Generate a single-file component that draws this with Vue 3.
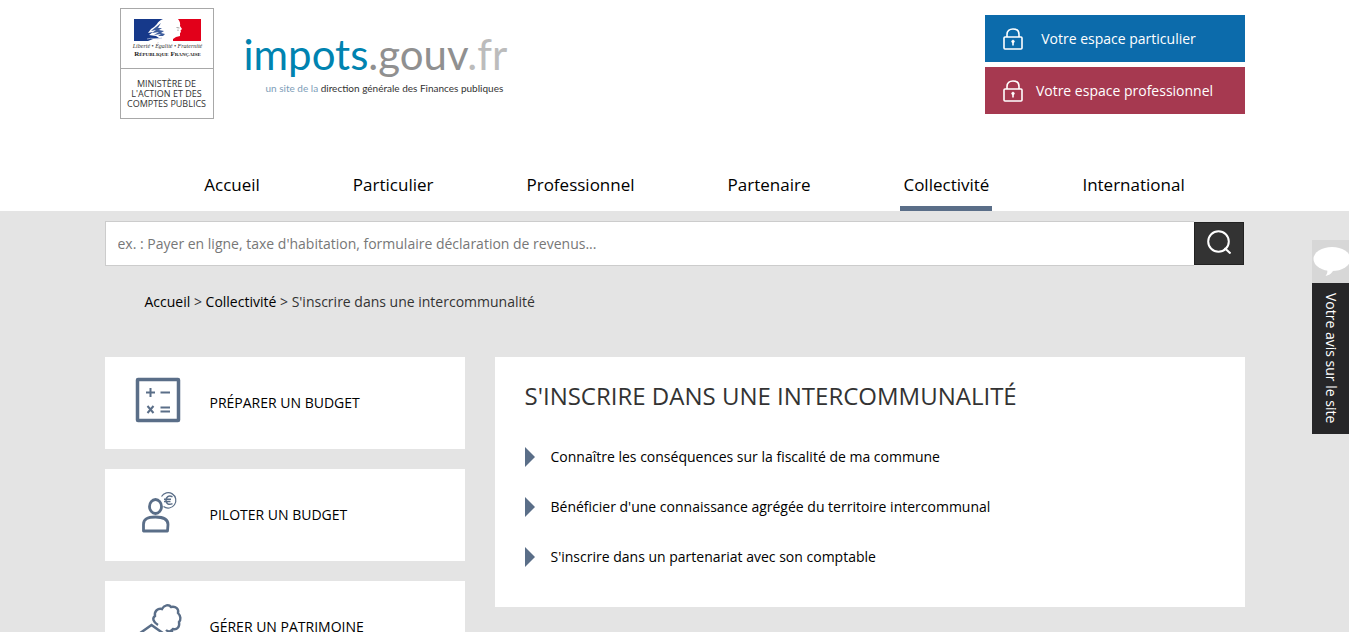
<script setup>
import { ref } from 'vue'

const query = ref('')

const menu = [
  { label: 'Accueil' },
  { label: 'Particulier' },
  { label: 'Professionnel' },
  { label: 'Partenaire' },
  { label: 'Collectivité', active: true },
  { label: 'International' }
]

const cards = [
  { label: 'Préparer un budget', icon: 'calc' },
  { label: 'Piloter un budget', icon: 'person' },
  { label: 'Gérer un patrimoine', icon: 'estate' }
]

const topics = [
  'Connaître les conséquences sur la fiscalité de ma commune',
  "Bénéficier d'une connaissance agrégée du territoire intercommunal",
  "S'inscrire dans un partenariat avec son comptable"
]

const spaces = [
  { label: 'Votre espace particulier', kind: 'particulier' },
  { label: 'Votre espace professionnel', kind: 'professionnel' }
]
</script>

<template>
  <div class="page">
    <header class="header">
      <div class="container top">
        <div class="brand">
          <div class="ministry">
            <div class="republic">
              <svg class="flag" viewBox="0 0 67 22" aria-hidden="true">
                <rect width="67" height="22" fill="#fff" />
                <path d="M0 0H29C26 1 24 3 23 5L20 8L17 10L14 14L19 13L15 16L22 17L25 19L19 20L14 22H0Z" fill="#16398a" />
                <path d="M27 4L22 8L17 12L22 11L18 14L25 13L20 16L27 15L24 17L29 17L31 15L27 14L30 12L25 11L28 9L24 9Z" fill="#3c5c9c" />
                <path d="M67 0H44C46 2 46.500 5 46 7L48 10L46.500 11.500L47 13L46 14L46 17L42 18L39 20V22H67Z" fill="#e2001a" />
                <path d="M42.500 8.500L45.500 9M44 10.500V12" stroke="#888" stroke-width="0.8" />
                <path d="M13 20C18 18 22 21 28 19" fill="none" stroke="#aab8d4" stroke-width="0.8" />
              </svg>
              <span class="motto">Liberté • Égalité • Fraternité</span>
              <span class="rf">République Française</span>
            </div>
            <div class="ministry-name">MINISTÈRE DE<br />L'ACTION ET DES<br />COMPTES PUBLICS</div>
          </div>
          <a class="site-logo" href="#">
            <span class="wordmark"><span class="blue">impots</span>.gouv<span class="light">.fr</span></span>
            <span class="tagline"><span class="soft">un site de la</span> direction générale des Finances publiques</span>
          </a>
        </div>
        <div class="spaces">
          <a v-for="s in spaces" :key="s.kind" href="#" class="space" :class="s.kind">
            <svg class="lock" viewBox="0 0 20 22" fill="none" stroke="#fff" stroke-width="1.6" aria-hidden="true">
              <rect x="1" y="9" width="18" height="12" rx="1" />
              <path d="M4 9V6.500C4 3 6.500 1 10 1S16 3 16 6.500V9" />
              <circle cx="10" cy="13.500" r="1.300" fill="#fff" stroke-width="0.8" />
              <path d="M10 14V17.500" />
            </svg>
            <span class="space-label">{{ s.label }}</span>
          </a>
        </div>
      </div>
      <nav class="container">
        <ul class="menu">
          <li v-for="m in menu" :key="m.label">
            <a href="#" :class="{ active: m.active }">{{ m.label }}</a>
          </li>
        </ul>
      </nav>
    </header>

    <main class="container">
      <form class="search" @submit.prevent>
        <input v-model="query" type="text" aria-label="Rechercher" placeholder="ex. : Payer en ligne, taxe d'habitation, formulaire déclaration de revenus..." />
        <button type="submit" aria-label="Lancer la recherche">
          <svg viewBox="0 0 24 24" width="24" height="24" fill="none" stroke="#fff" stroke-width="2">
            <circle cx="11.500" cy="11.500" r="10.300" />
            <path d="M17.500 18L23.500 23.500" />
          </svg>
        </button>
      </form>

      <div class="crumbs">
        <a href="#">Accueil</a> &gt; <a href="#">Collectivité</a> &gt; <span>S'inscrire dans une intercommunalité</span>
      </div>

      <div class="columns">
        <aside class="cards">
          <a v-for="c in cards" :key="c.label" href="#" class="card">
            <svg v-if="c.icon === 'calc'" class="icon" viewBox="0 0 48 48" fill="none" stroke="#5a6e88" aria-hidden="true">
              <rect x="3.500" y="3.500" width="41" height="41" rx="0.500" stroke-width="3.500" />
              <path d="M12 16.500H21M16.500 12V21M26.500 16.500H36M26.500 31.500H36M26.500 35.500H36M13.500 30L19.500 37M19.500 30L13.500 37" stroke-width="2" />
            </svg>
            <svg v-else-if="c.icon === 'person'" class="icon" viewBox="0 0 48 48" fill="none" stroke="#5a6e88" aria-hidden="true">
              <ellipse cx="21.500" cy="18.500" rx="6" ry="7" stroke-width="2.800" />
              <path d="M9.500 43V36.500C9.500 30.500 14 29 21.500 29S34 30.500 34 36.500L33.500 43Z" stroke-width="2.800" stroke-linejoin="round" />
              <path d="M27.500 8.500A7.700 7.700 0 1 1 29.500 18.500" stroke-width="1.200" />
              <path d="M38.500 8.800C34.500 6.800 32 9.300 32 12.300S34.500 17.500 38.500 15.600M30 11.200H37M30 13.500H36.500" stroke-width="1.500" />
            </svg>
            <svg v-else class="icon" viewBox="0 0 48 48" fill="none" stroke="#5a6e88" aria-hidden="true">
              <path d="M2 36L17.500 25L33 36M7 33V46H28V33" stroke-width="2.600" />
              <path d="M24 25C19 22 18 18 21 16C20 11 24 8 28 9C30 5 35 4 37 7C42 6 45 9 44 13C47 16 47 20 45 22C46 27 43 30 39 29C37 32 34 32 32 30M38 29V45" stroke-width="2.400" />
            </svg>
            <span>{{ c.label }}</span>
          </a>
        </aside>
        <section class="panel">
          <h1>S'inscrire dans une intercommunalité</h1>
          <ul>
            <li v-for="t in topics" :key="t"><a href="#">{{ t }}</a></li>
          </ul>
        </section>
      </div>
    </main>

    <a class="feedback" href="#">
      <span class="bubble">
        <svg viewBox="0 0 37 43" aria-hidden="true">
          <ellipse cx="20" cy="19" rx="18.500" ry="12" fill="#fff" />
          <path d="M15 29C16 32 15 34 13.500 36C18 35 20 33 22 29Z" fill="#fff" />
        </svg>
      </span>
      <span class="feedback-text">Votre avis sur le site</span>
    </a>
  </div>
</template>

<style>
body {
  margin: 0;
  background: #e4e4e4;
}
</style>

<style scoped>
.page {
  font-family: "Open Sans", "Noto Sans", sans-serif;
  font-size: 14px;
  line-height: 20px;
  color: #333;
  padding-bottom: 20px;
}
a {
  color: #000;
  text-decoration: none;
}
ul {
  list-style: none;
  margin: 0;
  padding: 0;
}
.container {
  max-width: 1140px;
  margin: 0 auto;
}
.header {
  background: #fff;
}
.top {
  display: flex;
  justify-content: space-between;
  height: 160px;
}
.brand {
  display: flex;
  align-items: flex-start;
  gap: 30px;
  padding: 8px 0 0 15px;
}
.ministry {
  width: 92px;
  border: 1px solid #a8a8a8;
  text-align: center;
}
.republic {
  display: flex;
  flex-direction: column;
  align-items: center;
  height: 49px;
  padding: 10px 0 0 2px;
  border-bottom: 1px solid #a8a8a8;
  font-family: "Liberation Serif", serif;
  white-space: nowrap;
}
.flag {
  width: 67px;
  height: 22px;
}
.motto {
  margin-top: 1px;
  font-size: 6px;
  line-height: 8px;
  font-style: italic;
}
.rf {
  font-size: 7px;
  line-height: 9px;
  font-weight: bold;
  font-variant: small-caps;
  color: #222;
}
.ministry-name {
  padding: 10px 0 9px;
  font-family: "Open Sans", sans-serif;
  font-size: 9px;
  line-height: 10px;
  white-space: nowrap;
}
.site-logo {
  display: flex;
  flex-direction: column;
  padding-top: 20px;
  font-family: Lato, sans-serif;
  white-space: nowrap;
}
.wordmark {
  font-size: 42px;
  line-height: 52px;
  color: #909090;
}
.blue {
  color: #0083b0;
}
.light {
  color: #bcbcbc;
}
.tagline {
  padding-left: 22px;
  font-size: 10px;
  line-height: 16px;
  color: #333;
}
.soft {
  color: #7d9db8;
}
.spaces {
  display: flex;
  flex-direction: column;
  gap: 5px;
  width: 260px;
  padding-top: 15px;
}
.space {
  display: flex;
  align-items: center;
  height: 47px;
  padding: 0 30px 0 18px;
  color: #fff;
}
.particulier {
  background: #0c6bab;
}
.professionnel {
  background: #a63950;
}
.lock {
  flex: none;
  width: 20px;
  height: 22px;
}
.space-label {
  flex: 1;
  text-align: center;
  padding-left: 12px;
}
.particulier .space-label {
  padding-left: 0;
}
.menu {
  display: flex;
  justify-content: center;
  gap: 87px;
  padding-left: 40px;
}
.menu a {
  display: block;
  padding: 12px 3px 8px;
  border-bottom: 5px solid transparent;
  font-size: 17px;
  line-height: 26px;
}
.menu .active {
  border-color: #5a6e88;
}
.search {
  display: flex;
  padding: 10px 1px 0 0;
}
.search input {
  flex: 1;
  min-width: 0;
  height: 45px;
  box-sizing: border-box;
  padding: 0 12px;
  border: 1px solid #ccc;
  border-right: 0;
  border-radius: 0;
  background: #fff;
  font: inherit;
  color: #333;
}
.search input::placeholder {
  color: #777;
  opacity: 1;
}
.search button {
  width: 50px;
  height: 43px;
  margin-top: 1px;
  padding: 0;
  border: 1px solid #222;
  background: #333;
}
.search svg {
  display: block;
  margin: 0 auto 3px;
}
.crumbs {
  padding: 26px 40px 45px;
}
.columns {
  display: grid;
  grid-template-columns: 360px 1fr;
  gap: 30px;
  align-items: start;
}
.cards {
  display: flex;
  flex-direction: column;
  gap: 20px;
}
.card {
  display: flex;
  align-items: center;
  gap: 28px;
  padding: 19px 29px 25px;
  background: #fff;
  text-transform: uppercase;
}
.card span {
  padding-top: 6px;
}
.icon {
  flex: none;
  width: 48px;
  height: 48px;
}
.panel {
  background: #fff;
  padding: 20px 30px 30px;
}
.panel h1 {
  margin: 0 0 32px;
  font-size: 24px;
  line-height: 38px;
  font-weight: 400;
  text-transform: uppercase;
}
.panel li {
  display: flex;
  align-items: center;
  gap: 16px;
  height: 20px;
  padding-bottom: 30px;
}
.panel li:last-child {
  padding-bottom: 10px;
}
.panel li::before {
  content: "";
  border: 10px solid transparent;
  border-left-color: #5a6e88;
  border-right: 0;
}
.feedback {
  position: fixed;
  top: 240px;
  right: 0;
  width: 37px;
  color: #fff;
}
.bubble {
  display: block;
  background: #d7d7d7;
}
.bubble svg {
  display: block;
  width: 37px;
  height: 43px;
}
.feedback-text {
  display: block;
  box-sizing: border-box;
  width: 37px;
  height: 151px;
  padding-right: 8px;
  background: #262628;
  writing-mode: vertical-rl;
  text-align: center;
}
</style>
